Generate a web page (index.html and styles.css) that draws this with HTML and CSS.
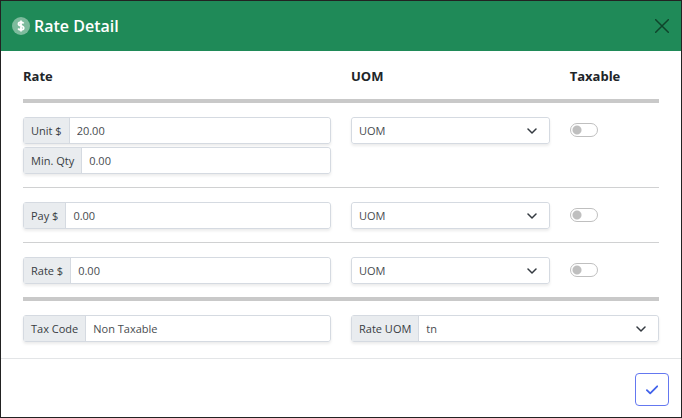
FILE: index.html
```html
<!DOCTYPE html>
<html lang="en">
<head>
<meta charset="utf-8">
<title>Rate Detail</title>
<link rel="stylesheet" href="styles.css">
</head>
<body>
<form class="dialog" role="dialog" aria-labelledby="title">
  <header class="dialog-header">
    <svg class="coin" viewBox="0 0 18 18" aria-hidden="true">
      <circle cx="9" cy="9" r="9" fill="#7dbb9d"/>
      <path d="M11.6 6.4C11.1 5.6 10.2 5.2 9 5.2c-1.5 0-2.5.7-2.5 1.8 0 2.7 5.2 1.2 5.2 4 0 1.2-1.1 1.9-2.7 1.9-1.3 0-2.3-.5-2.8-1.4M9 3.5v11" fill="none" stroke="#fff" stroke-width="1.8"/>
    </svg>
    <h1 class="title" id="title">Rate Detail</h1>
    <button class="close" type="button" aria-label="Close">
      <svg viewBox="0 0 14 14" aria-hidden="true"><path d="M.7.7l12.6 12.6M13.3.7L.7 13.3" fill="none" stroke="#0f442b" stroke-width="1.5" stroke-linecap="round"/></svg>
    </button>
  </header>
  <main class="dialog-body">
    <div class="row headings">
      <h2 class="rate" id="h-rate">Rate</h2>
      <h2 class="uom" id="h-uom">UOM</h2>
      <h2 class="tax" id="h-tax">Taxable</h2>
    </div>
    <hr class="thick">
    <div class="row">
      <div class="rate stack">
        <div class="group"><label for="unit">Unit $</label><input id="unit" type="text" value="20.00"></div>
        <div class="group"><label for="qty">Min. Qty</label><input id="qty" type="text" value="0.00"></div>
      </div>
      <div class="uom group"><select aria-labelledby="h-uom"><option>UOM</option></select></div>
      <input class="tax switch" type="checkbox" role="switch" aria-labelledby="h-tax">
    </div>
    <hr>
    <div class="row">
      <div class="rate group"><label for="pay">Pay $</label><input id="pay" type="text" value="0.00"></div>
      <div class="uom group"><select aria-labelledby="h-uom"><option>UOM</option></select></div>
      <input class="tax switch" type="checkbox" role="switch" aria-labelledby="h-tax">
    </div>
    <hr>
    <div class="row">
      <div class="rate group"><label for="rate">Rate $</label><input id="rate" type="text" value="0.00"></div>
      <div class="uom group"><select aria-labelledby="h-uom"><option>UOM</option></select></div>
      <input class="tax switch" type="checkbox" role="switch" aria-labelledby="h-tax">
    </div>
    <hr class="thick">
    <div class="row">
      <div class="rate group"><label for="code">Tax Code</label><input id="code" type="text" value="Non Taxable"></div>
      <div class="rate group"><label for="rate-uom">Rate UOM</label><select id="rate-uom"><option>tn</option></select></div>
    </div>
  </main>
  <footer class="dialog-footer">
    <button class="confirm" type="button" aria-label="Save">
      <svg viewBox="0 0 12 10" aria-hidden="true"><path d="M.9 5.2L4.2 8.4 11.2 1.3" fill="none" stroke="#4263eb" stroke-width="1.8" stroke-linecap="round" stroke-linejoin="round"/></svg>
    </button>
  </footer>
</form>
</body>
</html>
```
FILE: styles.css
```css
* {
  box-sizing: border-box;
}

body {
  margin: 0;
  background: #fff;
  color: #212529;
  font: 11px/18px "Open Sans", "Noto Sans", sans-serif;
}

.dialog {
  min-height: 100vh;
  border: 1px solid #222;
}

.dialog-header {
  display: flex;
  align-items: center;
  gap: 4px;
  height: 50px;
  padding: 0 12px 0 11px;
  background: #1f8a58;
}

.coin {
  width: 18px;
  height: 18px;
}

.title {
  margin: 0;
  color: #fff;
  font-size: 16px;
  font-weight: 600;
}

.close {
  display: flex;
  margin-left: auto;
  padding: 0;
  border: 0;
  background: none;
}

.close svg {
  width: 14px;
  height: 14px;
}

.dialog-body {
  padding: 16px 22px;
}

.row {
  display: grid;
  grid-template-columns: repeat(12, minmax(0, 1fr));
  column-gap: 20px;
  align-items: start;
}

.rate {
  grid-column: span 6;
}

.uom {
  grid-column: span 4;
}

.tax {
  grid-column: span 2;
}

.headings h2 {
  margin: 0;
  font-size: 13px;
  font-weight: 700;
  line-height: 19px;
}

hr {
  height: 1px;
  margin: 13px 0 14px;
  border: 0;
  background: #d0d1d2;
}

hr.thick {
  height: 4px;
  background: #c9c9c9;
}

.stack {
  display: grid;
  gap: 3px;
}

.group {
  display: flex;
  height: 27px;
  border: 1px solid #d5dae1;
  border-radius: 3px;
  box-shadow: 0 2px 3px rgba(0, 0, 0, 0.08);
}

.group label {
  padding: 4px 7px;
  border-right: 1px solid #d5dae1;
  background: #e9ecef;
  color: #383c42;
  white-space: nowrap;
}

.group input,
.group select {
  flex: 1;
  min-width: 0;
  padding: 0 7px;
  border: 0;
  border-radius: 3px;
  background: #fff;
  color: #484c50;
  font: inherit;
}

.group select {
  appearance: none;
  background: #fff url("data:image/svg+xml,%3Csvg xmlns='http://www.w3.org/2000/svg' viewBox='0 0 10 6'%3E%3Cpath d='M1 1l4 4 4-4' fill='none' stroke='%23343a40' stroke-width='1.5' stroke-linecap='round' stroke-linejoin='round'/%3E%3C/svg%3E") no-repeat right 12px center / 10px 6px;
}

.switch {
  appearance: none;
  width: 28px;
  height: 14px;
  margin: 6px 0 0;
  border: 1px solid #bfbfbf;
  border-radius: 7px;
  background: radial-gradient(circle at 6px 6px, #bfbfbf 4px, #fff 5px);
}

.dialog-footer {
  display: flex;
  justify-content: flex-end;
  padding: 14px 12px 10px;
  border-top: 1px solid #e3e5e7;
}

.confirm {
  display: grid;
  place-items: center;
  width: 34px;
  height: 33px;
  padding: 0;
  border: 1px solid #6478f0;
  border-radius: 4px;
  background: #fff;
}

.confirm svg {
  width: 12px;
  height: 10px;
}
```
